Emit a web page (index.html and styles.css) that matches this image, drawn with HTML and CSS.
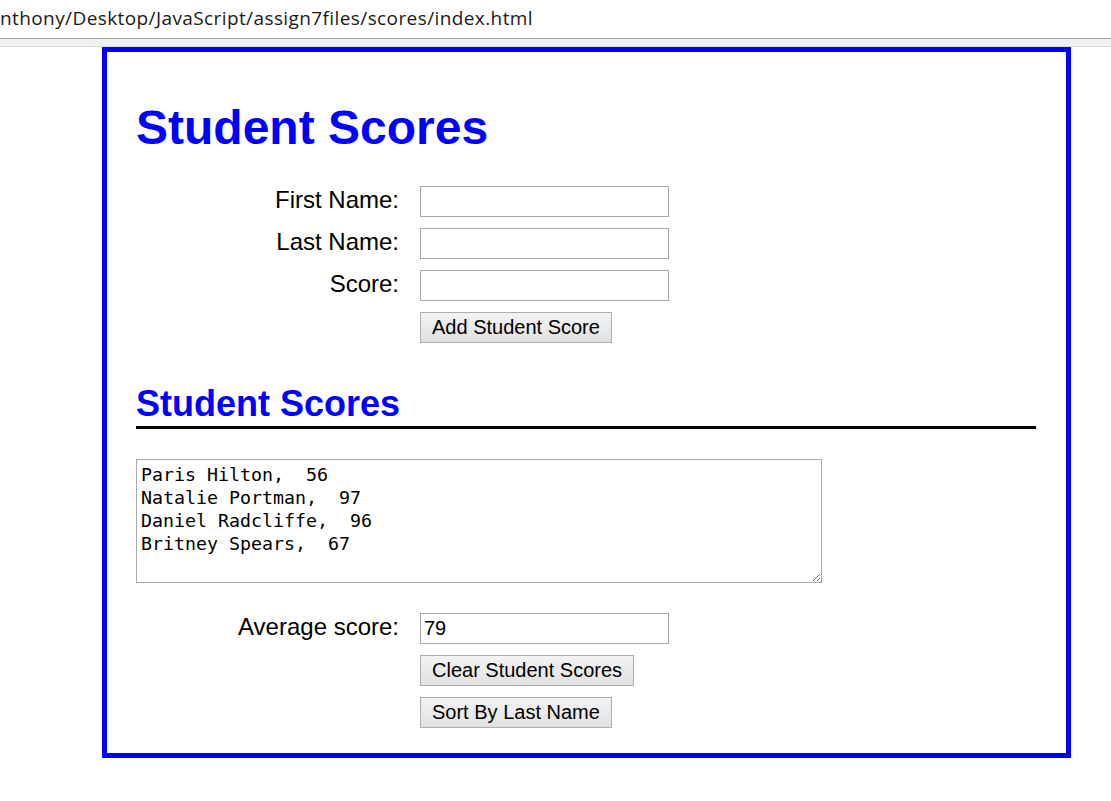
FILE: index.html
```html
<!DOCTYPE html>
<html lang="en">
<head>
<meta charset="utf-8">
<title>Student Scores</title>
<link rel="stylesheet" href="styles.css">
</head>
<body>
<div class="urlbar"><span class="url">nthony/Desktop/JavaScript/assign7files/scores/index.html</span></div>
<div class="toolbar-edge"></div>
<main class="box">
  <h1 class="title">Student Scores</h1>
  <div class="form-grid">
    <label class="lbl" for="first">First Name:</label>
    <input class="field" type="text" id="first">
    <label class="lbl" for="last">Last Name:</label>
    <input class="field" type="text" id="last">
    <label class="lbl" for="score">Score:</label>
    <input class="field" type="text" id="score">
    <span></span>
    <button class="btn" type="button">Add Student Score</button>
  </div>
  <h2 class="subtitle">Student Scores</h2>
  <textarea class="scores" rows="5" cols="60">Paris Hilton,  56
Natalie Portman,  97
Daniel Radcliffe,  96
Britney Spears,  67</textarea>
  <div class="form-grid avg-grid">
    <label class="lbl" for="avg">Average score:</label>
    <input class="field" type="text" id="avg" value="79">
    <span></span>
    <button class="btn" type="button">Clear Student Scores</button>
    <span></span>
    <button class="btn" type="button">Sort By Last Name</button>
  </div>
</main>
</body>
</html>
```
FILE: styles.css
```css
html, body {
  margin: 0;
  padding: 0;
  background: #ffffff;
}

body {
  font-family: "Liberation Sans", Arial, sans-serif;
  color: #000;
}

.urlbar {
  height: 38px;
  background: #ffffff;
  display: flex;
  align-items: center;
  overflow: hidden;
  white-space: nowrap;
}

.url {
  font-family: "Open Sans", "Noto Sans", sans-serif;
  font-size: 19px;
  color: #1a1a1a;
  margin-left: 0;
  letter-spacing: 0.4px;
  position: relative;
  top: -1px;
}

.toolbar-edge {
  height: 7px;
  background: #f0f0f0;
  border-top: 1px solid #a6a6a6;
  border-bottom: 1px solid #d9d9d9;
}

.box {
  display: block;
  margin: 0 0 0 102px;
  width: 900px;
  border: 5px solid #0000ff;
  padding: 0 30px 25px 29px;
}

.title {
  margin: 48px 0 31px;
  font-size: 48px;
  line-height: 55px;
  font-weight: bold;
  color: #0000ff;
}

.form-grid {
  display: grid;
  grid-template-columns: 263px auto;
  grid-auto-rows: 31px;
  column-gap: 21px;
  row-gap: 11px;
  align-items: center;
  justify-items: start;
}

.lbl {
  justify-self: end;
  font-size: 24px;
  line-height: 27px;
  position: relative;
  top: -2px;
}

.field {
  box-sizing: border-box;
  width: 249px;
  height: 31px;
  margin: 0;
  border: 1px solid #a9a9a9;
  padding: 0 3px;
  font-family: "Liberation Sans", Arial, sans-serif;
  font-size: 20px;
  color: #000;
  background: #fff;
  outline: none;
}

.btn {
  box-sizing: border-box;
  height: 31px;
  margin: 0;
  padding: 0 11px;
  border: 1px solid #adadad;
  border-radius: 0;
  background: linear-gradient(#f3f3f3, #e1e1e1);
  font-family: "Liberation Sans", Arial, sans-serif;
  font-size: 20px;
  line-height: 23px;
  color: #000;
}

.subtitle {
  margin: 40px 0 30px;
  font-size: 36px;
  line-height: 41px;
  font-weight: bold;
  color: #0000ff;
  padding-bottom: 2px;
  border-bottom: 3px solid #000;
}

.scores {
  display: block;
  box-sizing: border-box;
  width: 686px;
  height: 124px;
  margin: 0 0 30px;
  padding: 3px 4px;
  border: 1px solid #a9a9a9;
  font-family: "DejaVu Sans Mono", "Liberation Mono", monospace;
  font-size: 18.3px;
  line-height: 23px;
  color: #000;
  background: #fff;
  resize: both;
  outline: none;
}
```
